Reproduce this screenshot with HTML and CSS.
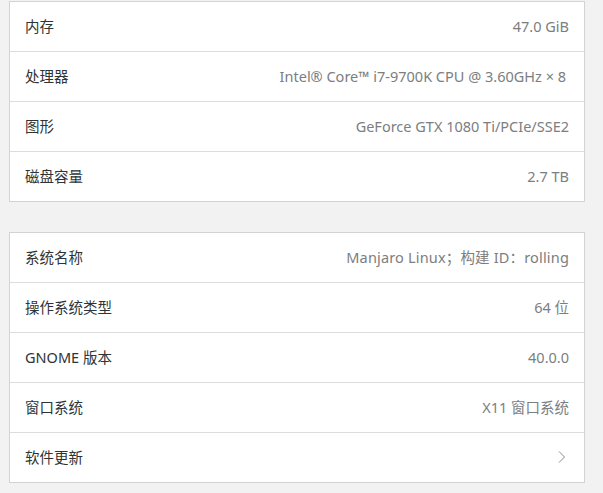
FILE: index.html
```html
<!DOCTYPE html>
<html lang="zh-CN">
<head>
<meta charset="utf-8">
<link rel="stylesheet" href="styles.css">
</head>
<body>
<div class="page">
  <div class="card">
    <div class="row"><span class="label">内存</span><span class="value">47.0 GiB</span></div>
    <div class="row"><span class="label">处理器</span><span class="value value-cpu">Intel® Core™ i7-9700K CPU @ 3.60GHz × 8</span></div>
    <div class="row"><span class="label">图形</span><span class="value">GeForce GTX 1080 Ti/PCIe/SSE2</span></div>
    <div class="row"><span class="label">磁盘容量</span><span class="value">2.7 TB</span></div>
  </div>
  <div class="card">
    <div class="row"><span class="label">系统名称</span><span class="value value-os">Manjaro Linux；构建 ID：rolling</span></div>
    <div class="row"><span class="label">操作系统类型</span><span class="value">64 位</span></div>
    <div class="row"><span class="label">GNOME 版本</span><span class="value">40.0.0</span></div>
    <div class="row"><span class="label">窗口系统</span><span class="value">X11 窗口系统</span></div>
    <div class="row"><span class="label">软件更新</span><svg class="chevron" width="8" height="14" viewBox="0 0 8 14"><path d="M1 1.5 L6.5 7 L1 12.5" fill="none" stroke="#8a8a8a" stroke-width="1"/></svg></div>
  </div>
</div>
</body>
</html>
```
FILE: styles.css
```css
html, body {
  margin: 0;
  padding: 0;
  background: #f2f2f2;
}
.page {
  padding: 1px 18px 0 9px;
  display: flex;
  flex-direction: column;
  gap: 30px;
  font-family: "Noto Sans", "Noto Sans CJK SC", sans-serif;
  font-size: 14.5px;
}
.card {
  background: #ffffff;
  border: 1px solid #d3d3d3;
  display: flex;
  flex-direction: column;
}
.row {
  height: 47px;
  display: flex;
  align-items: center;
  justify-content: space-between;
  padding: 0 15px 2px;
  border-top: 1px solid #dcdcdc;
}
.row:first-child {
  border-top: none;
}
.label {
  color: #2e3436;
}
.value {
  color: #7c7e7f;
}
.value-cpu {
  margin-right: 3px;
}
.value-os {
  letter-spacing: 0.17px;
}
.chevron {
  margin-right: 3px;
}
```
